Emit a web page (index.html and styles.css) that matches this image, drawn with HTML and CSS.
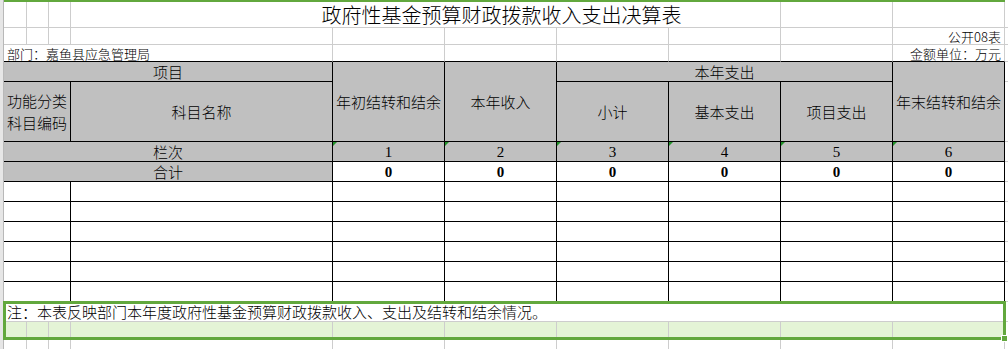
FILE: index.html
```html
<!DOCTYPE html>
<html lang="zh-CN">
<head>
<meta charset="utf-8">
<title>政府性基金预算财政拨款收入支出决算表</title>
<link rel="stylesheet" href="styles.css">
</head>
<body>
<div class="sheet">
  <div class="gut"></div>

  <!-- column header highlight -->
  <div class="hbar"></div><div class="k0"></div>

  <!-- title row -->
  <div class="c"></div><div class="c"></div><div class="c"></div>
  <div class="c span5 title">政府性基金预算财政拨款收入支出决算表</div>
  <div class="c"></div><div class="c"></div><div class="c k"></div>

  <!-- 公开08表 -->
  <div class="c"></div><div class="c"></div><div class="c"></div><div class="c"></div>
  <div class="c"></div><div class="c"></div><div class="c"></div><div class="c"></div><div class="c"></div>
  <div class="c sm r">公开08表</div>
  <div class="c k"></div>

  <!-- 部门 -->
  <div class="c span4 sm l bb">部门：嘉鱼县应急管理局</div>
  <div class="c bb"></div><div class="c bb"></div><div class="c bb"></div><div class="c bb"></div><div class="c bb"></div>
  <div class="c sm r bb">金额单位：万元</div>
  <div class="c k"></div>

  <!-- header row 1 -->
  <div class="c t g span4">项目</div>
  <div class="c t g rs2">年初结转和结余</div>
  <div class="c t g rs2">本年收入</div>
  <div class="c t g span3">本年支出</div>
  <div class="c t g rs2">年末结转和结余</div>
  <div class="c k"></div>

  <!-- header row 2 -->
  <div class="c t g span3 two"><span class="ln">功能分类</span><span class="ln">科目编码</span></div>
  <div class="c t g">科目名称</div>
  <div class="c t g">小计</div>
  <div class="c t g">基本支出</div>
  <div class="c t g">项目支出</div>
  <div class="c k"></div>

  <!-- 栏次 -->
  <div class="c t g span4">栏次</div>
  <div class="c t g num tri">1</div>
  <div class="c t g num tri">2</div>
  <div class="c t g num tri">3</div>
  <div class="c t g num tri">4</div>
  <div class="c t g num tri">5</div>
  <div class="c t g num tri">6</div>
  <div class="c k"></div>

  <!-- 合计 -->
  <div class="c t g span4">合计</div>
  <div class="c t num bold">0</div>
  <div class="c t num bold">0</div>
  <div class="c t num bold">0</div>
  <div class="c t num bold">0</div>
  <div class="c t num bold">0</div>
  <div class="c t num bold">0</div>
  <div class="c k"></div>

  <!-- data rows -->
  <div class="c t span3"></div><div class="c t"></div>
  <div class="c t"></div><div class="c t"></div><div class="c t"></div><div class="c t"></div><div class="c t"></div><div class="c t"></div>
  <div class="c k"></div>

  <div class="c t span3"></div><div class="c t"></div>
  <div class="c t"></div><div class="c t"></div><div class="c t"></div><div class="c t"></div><div class="c t"></div><div class="c t"></div>
  <div class="c k"></div>

  <div class="c t span3"></div><div class="c t"></div>
  <div class="c t"></div><div class="c t"></div><div class="c t"></div><div class="c t"></div><div class="c t"></div><div class="c t"></div>
  <div class="c k"></div>

  <div class="c t span3"></div><div class="c t"></div>
  <div class="c t"></div><div class="c t"></div><div class="c t"></div><div class="c t"></div><div class="c t"></div><div class="c t"></div>
  <div class="c k"></div>

  <div class="c t span3"></div><div class="c t"></div>
  <div class="c t"></div><div class="c t"></div><div class="c t"></div><div class="c t"></div><div class="c t"></div><div class="c t"></div>
  <div class="c k"></div>

  <div class="c t span3"></div><div class="c t"></div>
  <div class="c t"></div><div class="c t"></div><div class="c t"></div><div class="c t"></div><div class="c t"></div><div class="c t"></div>
  <div class="c k"></div>

  <!-- note -->
  <div class="c span10 note">注：本表反映部门本年度政府性基金预算财政拨款收入、支出及结转和结余情况。</div>
  <div class="c k"></div>

  <!-- selected shaded row -->
  <div class="c sel"></div><div class="c sel"></div><div class="c sel"></div><div class="c sel"></div>
  <div class="c sel"></div><div class="c sel"></div><div class="c sel"></div><div class="c sel"></div><div class="c sel"></div><div class="c sel"></div>
  <div class="c k"></div>

  <!-- trailing row -->
  <div class="c nb"></div><div class="c nb"></div><div class="c nb"></div><div class="c nb"></div>
  <div class="c nb"></div><div class="c nb"></div><div class="c nb"></div><div class="c nb"></div><div class="c nb"></div><div class="c nb"></div>
  <div class="c k nb"></div>

  <div class="selbox"></div>
  <div class="handle"></div>
</div>
</body>
</html>
```
FILE: styles.css
```css
body {
  margin: 0;
  background: #ffffff;
  color: #000000;
  font-family: "Noto Sans CJK SC", "Noto Sans", sans-serif;
  font-weight: 300;
}

.sheet {
  position: relative;
  width: 1008px;
  height: 349px;
  overflow: hidden;
  display: grid;
  grid-template-columns: 4px 23px 22px 22px 262px repeat(6, 112px) 3px;
  grid-template-rows: 2px 26px 17px 17px 20px 60px 20px 20px repeat(6, 20px) 20px 17px 10px;
}

.gut {
  grid-column: 1;
  grid-row: 1 / -1;
  background: #e6e6e6;
  border-right: 1px solid #b8b8b8;
}

.hbar {
  grid-column: span 10;
  background: #62a83d;
}

.c {
  box-sizing: border-box;
  border-right: 1px solid #cdcdcd;
  border-bottom: 1px solid #cdcdcd;
  display: flex;
  align-items: center;
  justify-content: center;
  font-size: 15px;
  line-height: 17px;
  white-space: nowrap;
  min-width: 0;
}

.k { border-right: none; }
.nb { border-bottom: none; }

.span3 { grid-column: span 3; }
.span4 { grid-column: span 4; }
.span5 { grid-column: span 5; }
.span10 { grid-column: span 10; }
.rs2 { grid-row: span 2; }

.t { border-right-color: #000000; border-bottom-color: #000000; }
.bb { border-bottom-color: #000000; }
.g { background: #c0c0c0; }

.title {
  font-size: 20px;
  line-height: 24px;
  padding-left: 152px;
  padding-top: 1px;
}

.sm {
  font-size: 13px;
  line-height: 15px;
  align-items: flex-end;
}

.r { justify-content: flex-end; padding-right: 3px; }
.l { justify-content: flex-start; padding-left: 3px; }

.two {
  flex-direction: column;
  padding-top: 1px;
}

.two .ln {
  display: block;
  line-height: 22px;
}

.num {
  font-family: "Liberation Serif", serif;
  font-weight: normal;
  align-items: flex-end;
}

.bold { font-weight: bold; }

.tri { position: relative; }
.tri::before {
  content: "";
  position: absolute;
  left: 0;
  top: 0;
  border-top: 4px solid #22922a;
  border-right: 4px solid transparent;
}

.note {
  justify-content: flex-start;
  padding-left: 3px;
}

.sel { background: #e4f4d6; }

.selbox {
  position: absolute;
  left: 3px;
  top: 301px;
  width: 1003px;
  height: 39px;
  box-sizing: border-box;
  border: 3px solid #62a83d;
}

.handle {
  position: absolute;
  left: 1001px;
  top: 335px;
  width: 7px;
  height: 7px;
  box-sizing: border-box;
  background: #62a83d;
  border: 1px solid #ffffff;
}
```
